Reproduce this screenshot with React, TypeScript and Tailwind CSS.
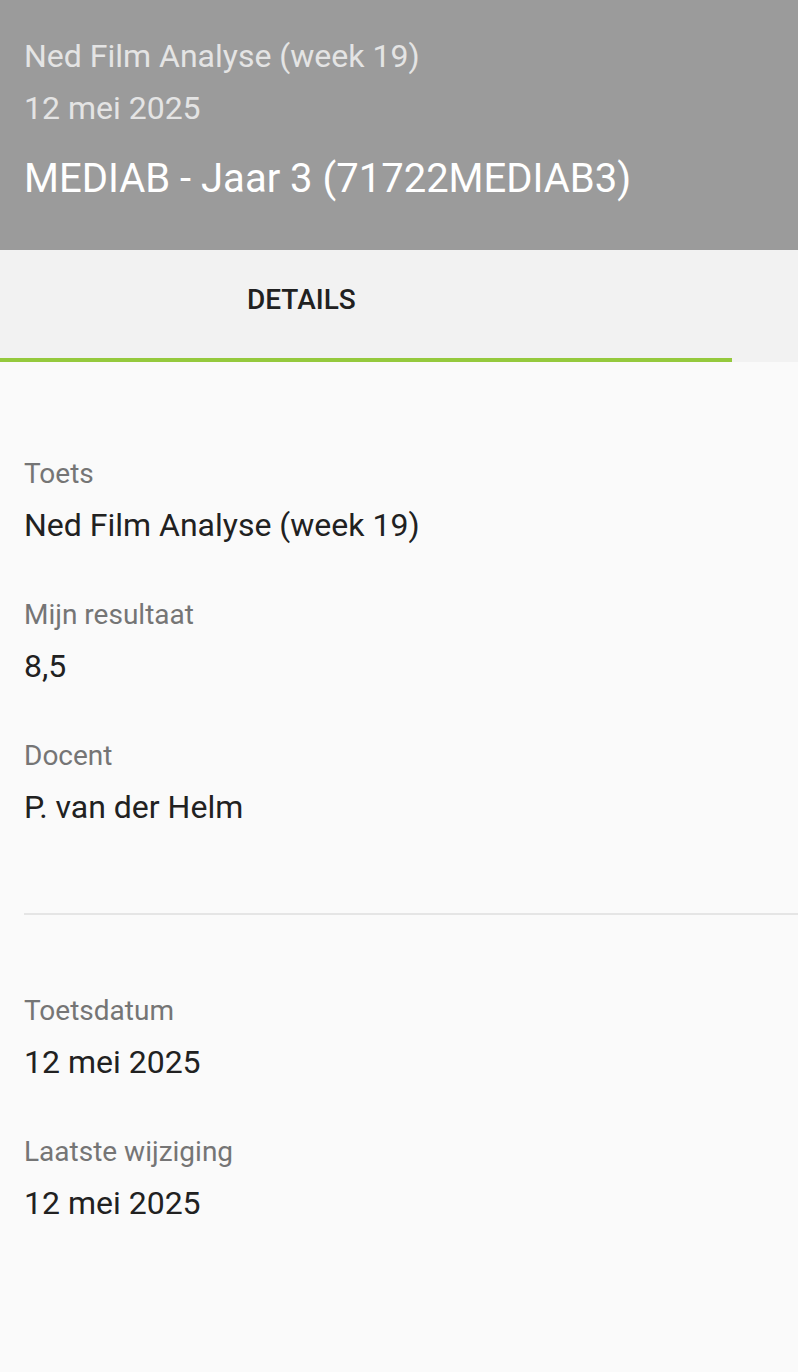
const fields = [
  { label: 'Toets', value: 'Ned Film Analyse (week 19)' },
  { label: 'Mijn resultaat', value: '8,5' },
  { label: 'Docent', value: 'P. van der Helm' },
];

const dates = [
  { label: 'Toetsdatum', value: '12 mei 2025' },
  { label: 'Laatste wijziging', value: '12 mei 2025' },
];

function Field({ label, value }: { label: string; value: string }) {
  return (
    <div>
      <p className="text-[28px] leading-[48px] text-[#757575]">{label}</p>
      <p className="text-[32px] leading-[54px] text-[#212121]">{value}</p>
    </div>
  );
}

export default function App() {
  return (
    <div className="min-h-screen bg-[#fafafa] font-['Roboto',sans-serif]">
      <header className="h-[250px] bg-[#9b9b9b] px-6 pt-[30px]">
        <p className="text-[32px] leading-[52px] text-[#e4e4e4]">Ned Film Analyse (week 19)</p>
        <p className="text-[32px] leading-[52px] text-[#e4e4e4]">12 mei 2025</p>
        <h1 className="mt-[17px] text-[40px] leading-[56px] text-white">MEDIAB - Jaar 3 (71722MEDIAB3)</h1>
      </header>

      <nav className="flex h-[112px] bg-[#f2f2f2]">
        <button type="button" className="flex w-[732px] flex-col text-left">
          <span className="flex flex-1 items-center pb-2 pl-[247px] text-[28px] font-medium text-[#212121]">DETAILS</span>
          <span className="h-[4px] w-full bg-[#95c93d]" />
        </button>
      </nav>

      <main className="pl-6 pt-[88px] pb-20">
        <div className="flex flex-col gap-[39px]">
          {fields.map(f => <Field key={f.label} {...f} />)}
        </div>
        <div className="mt-[79px] mb-[72px] h-[2px] bg-[#e5e5e5]" />
        <div className="flex flex-col gap-[39px]">
          {dates.map(f => <Field key={f.label} {...f} />)}
        </div>
      </main>
    </div>
  );
}
